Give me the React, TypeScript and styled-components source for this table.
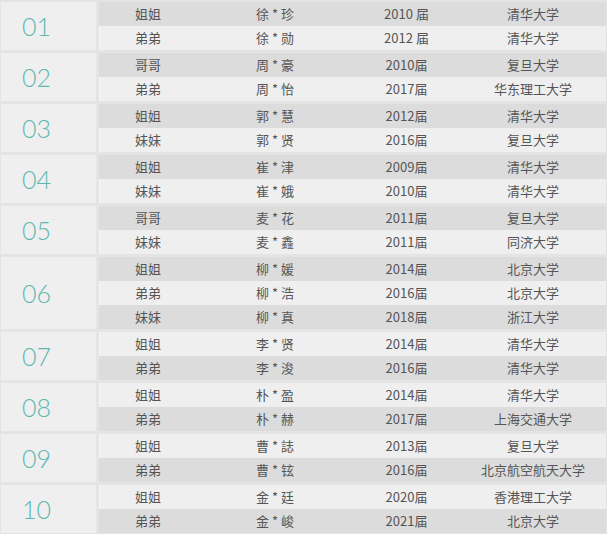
import React from 'react';
import styled, { createGlobalStyle } from 'styled-components';

type Member = { rel: string; name: string; year: string; school: string };
type Family = { no: string; members: Member[] };

const families: Family[] = [
  { no: '01', members: [
    { rel: '姐姐', name: '徐 * 珍', year: '2010 届', school: '清华大学' },
    { rel: '弟弟', name: '徐 * 勋', year: '2012 届', school: '清华大学' },
  ] },
  { no: '02', members: [
    { rel: '哥哥', name: '周 * 豪', year: '2010届', school: '复旦大学' },
    { rel: '弟弟', name: '周 * 怡', year: '2017届', school: '华东理工大学' },
  ] },
  { no: '03', members: [
    { rel: '姐姐', name: '郭 * 慧', year: '2012届', school: '清华大学' },
    { rel: '妹妹', name: '郭 * 贤', year: '2016届', school: '复旦大学' },
  ] },
  { no: '04', members: [
    { rel: '姐姐', name: '崔 * 津', year: '2009届', school: '清华大学' },
    { rel: '妹妹', name: '崔 * 娥', year: '2010届', school: '清华大学' },
  ] },
  { no: '05', members: [
    { rel: '哥哥', name: '麦 * 花', year: '2011届', school: '复旦大学' },
    { rel: '妹妹', name: '麦 * 鑫', year: '2011届', school: '同济大学' },
  ] },
  { no: '06', members: [
    { rel: '姐姐', name: '柳 * 媛', year: '2014届', school: '北京大学' },
    { rel: '弟弟', name: '柳 * 浩', year: '2016届', school: '北京大学' },
    { rel: '妹妹', name: '柳 * 真', year: '2018届', school: '浙江大学' },
  ] },
  { no: '07', members: [
    { rel: '姐姐', name: '李 * 贤', year: '2014届', school: '清华大学' },
    { rel: '弟弟', name: '李 * 浚', year: '2016届', school: '清华大学' },
  ] },
  { no: '08', members: [
    { rel: '姐姐', name: '朴 * 盈', year: '2014届', school: '清华大学' },
    { rel: '弟弟', name: '朴 * 赫', year: '2017届', school: '上海交通大学' },
  ] },
  { no: '09', members: [
    { rel: '姐姐', name: '曹 * 誌', year: '2013届', school: '复旦大学' },
    { rel: '弟弟', name: '曹 * 铉', year: '2016届', school: '北京航空航天大学' },
  ] },
  { no: '10', members: [
    { rel: '姐姐', name: '金 * 廷', year: '2020届', school: '香港理工大学' },
    { rel: '弟弟', name: '金 * 峻', year: '2021届', school: '北京大学' },
  ] },
];

const GlobalStyle = createGlobalStyle`
  html, body {
    margin: 0;
    padding: 0;
    background: #e4e4e4;
  }
  body {
    font-family: "Noto Sans CJK SC", "Noto Sans", sans-serif;
  }
`;

const Table = styled.div`
  display: flex;
  flex-direction: column;
  gap: 3px;
  width: 607px;
  height: 534px;
  padding: 2px 1px 1px 1px;
  box-sizing: border-box;
  background: #e4e4e4;
  overflow: hidden;
`;

const Group = styled.div`
  display: flex;
  gap: 2px;
`;

const NumberCell = styled.div`
  flex: 0 0 96px;
  display: flex;
  align-items: center;
  justify-content: center;
  padding-right: 25px;
  box-sizing: border-box;
  background: #efefef;
  color: #5db8b1;
  font-family: Lato, "Noto Sans", sans-serif;
  font-weight: 300;
  font-size: 25px;
  line-height: 1;
  box-shadow: inset -1px 0 0 #e6e6e6;
`;

const Rows = styled.div`
  flex: 1;
  display: flex;
  flex-direction: column;
`;

const Row = styled.div<{ $dark: boolean }>`
  display: grid;
  grid-template-columns: 98px 156px 107px 1fr;
  height: 24px;
  align-items: center;
  background: ${p => (p.$dark ? '#dcdcdc' : '#efefef')};
  box-shadow: ${p => (p.$dark ? 'none' : 'inset 1px 0 0 #f6f6f6')};
  color: #555;
  font-size: 13px;
  line-height: 24px;
`;

const Cell = styled.div`
  text-align: center;
  white-space: nowrap;
`;

export default function App() {
  let index = 0;
  return (
    <>
      <GlobalStyle />
      <Table>
        {families.map(f => (
          <Group key={f.no}>
            <NumberCell>{f.no}</NumberCell>
            <Rows>
              {f.members.map(m => {
                const dark = index % 2 === 0;
                index += 1;
                return (
                  <Row key={m.name} $dark={dark}>
                    <Cell>{m.rel}</Cell>
                    <Cell>{m.name}</Cell>
                    <Cell>{m.year}</Cell>
                    <Cell>{m.school}</Cell>
                  </Row>
                );
              })}
            </Rows>
          </Group>
        ))}
      </Table>
    </>
  );
}
